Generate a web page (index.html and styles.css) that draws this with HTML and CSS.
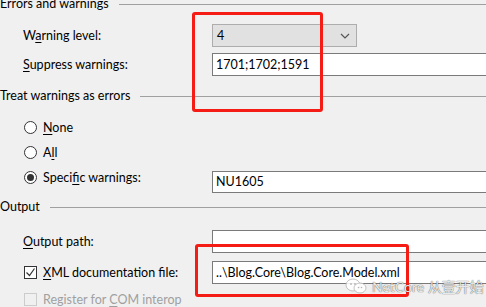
FILE: index.html
```html
<!DOCTYPE html>
<html lang="en">
<head>
    <meta charset="UTF-8">
    <title>Build options</title>
    <link rel="stylesheet" href="styles.css">
</head>
<body>
    <div class="page">
        <div class="group-title first"><span>Errors and warnings</span></div>
        <div class="row row-level">
            <span class="label">W<u>a</u>rning level:</span>
            <div class="select">
                <span>4</span>
                <svg class="chevron" width="10" height="6" viewBox="0 0 10 6"><path d="M1 1l4 4 4-4" fill="none" stroke="#555" stroke-width="1.2"/></svg>
            </div>
        </div>
        <div class="row row-suppress">
            <span class="label"><u>S</u>uppress warnings:</span>
            <div class="textbox">1701;1702;1591</div>
        </div>

        <div class="group-title treat"><span>Treat warnings as errors</span></div>
        <div class="radio-row">
            <span class="radio"></span><span><u>N</u>one</span>
        </div>
        <div class="radio-row">
            <span class="radio"></span><span>A<u>l</u>l</span>
        </div>
        <div class="radio-row specific">
            <span class="radio-label"><span class="radio checked"></span><span>Speci<u>f</u>ic warnings:</span></span>
            <div class="textbox short">NU1605</div>
        </div>

        <div class="group-title output"><span>Output</span></div>
        <div class="row row-path">
            <span class="label"><u>O</u>utput path:</span>
            <div class="textbox"></div>
        </div>
        <div class="row row-xml">
            <span class="label check-label"><span class="check on"><svg width="11" height="11" viewBox="0 0 11 11"><path d="M1.5 5.5l3 3 5-7" fill="none" stroke="#333" stroke-width="1.2"/></svg></span><span><u>X</u>ML documentation file:</span></span>
            <div class="textbox">..\Blog.Core\Blog.Core.Model.xml</div>
        </div>
        <div class="row row-com">
            <span class="label check-label disabled"><span class="check off"></span><span>Register for <u>C</u>OM interop</span></span>
        </div>
    </div>

    <div class="mark mark-top"></div>
    <div class="mark mark-bottom"></div>

    <div class="watermark">
        <svg width="22" height="16" viewBox="0 0 22 16">
            <ellipse cx="8" cy="7" rx="7" ry="6" fill="rgba(255,255,255,0.85)" stroke="#b5b5b5" stroke-width="0.8"/>
            <ellipse cx="15" cy="10" rx="6" ry="5" fill="rgba(255,255,255,0.85)" stroke="#b5b5b5" stroke-width="0.8"/>
            <circle cx="6" cy="6" r="0.9" fill="#b5b5b5"/>
            <circle cx="10" cy="6" r="0.9" fill="#b5b5b5"/>
            <circle cx="13.5" cy="9.5" r="0.8" fill="#b5b5b5"/>
            <circle cx="16.5" cy="9.5" r="0.8" fill="#b5b5b5"/>
        </svg>
        <span>NetCore 从壹开始</span>
    </div>
</body>
</html>
```

FILE: styles.css
```css
body {
    margin: 0;
    background: #f0f0f0;
    font-family: Lato, "Noto Sans CJK SC", sans-serif;
    font-size: 12.5px;
    color: #000;
    overflow: hidden;
    width: 486px;
    height: 307px;
    position: relative;
}

u {
    text-decoration: underline;
    text-underline-offset: 2px;
}

.group-title {
    display: flex;
    align-items: center;
    height: 16px;
    line-height: 16px;
}

.group-title::after {
    content: "";
    flex: 1;
    height: 1px;
    background: #a0a0a0;
    margin-left: 10px;
}

.group-title.first {
    margin-top: -4px;
}

.group-title.treat {
    margin-top: 12px;
}

.group-title.output {
    margin-top: 6px;
}

.row {
    display: flex;
    align-items: center;
    padding-left: 23px;
}

.row .label {
    width: 189px;
    flex: none;
}

.row-level {
    margin-top: 12px;
}

.row-suppress {
    margin-top: 6px;
}

.row-path {
    margin-top: 15px;
}

.row-xml {
    margin-top: 8px;
}

.row-com {
    height: 23px;
    margin-top: 4px;
}

.select {
    width: 145px;
    height: 23px;
    box-sizing: border-box;
    border: 1px solid #adadad;
    background: #e1e1e1;
    display: flex;
    align-items: center;
    justify-content: space-between;
    padding: 0 6px 0 4px;
}

/* text boxes run on past the window's right edge */
.textbox {
    width: 274px;
    height: 23px;
    box-sizing: border-box;
    border: 1px solid #7a7a7a;
    border-right: none;
    background: #fff;
    padding: 0 3px;
    line-height: 21px;
    white-space: nowrap;
    flex: none;
}

.textbox.short {
    height: 22px;
    line-height: 20px;
    margin-top: 6px;
}

.radio-row {
    display: flex;
    align-items: center;
    height: 25px;
    padding-left: 24px;
}

.group-title.treat + .radio-row {
    margin-top: 11px;
}

.radio-row.specific {
    align-items: flex-start;
    height: 28px;
}

.radio-label {
    display: flex;
    align-items: center;
    height: 25px;
    width: 188px;
    flex: none;
}

.radio {
    width: 13px;
    height: 13px;
    box-sizing: border-box;
    border: 1px solid #333;
    border-radius: 50%;
    background: #fff;
    margin-right: 6px;
    flex: none;
    display: flex;
    align-items: center;
    justify-content: center;
}

.radio.checked::after {
    content: "";
    width: 7px;
    height: 7px;
    border-radius: 50%;
    background: #333;
}

.check-label {
    display: flex;
    align-items: center;
    margin-left: 1px;
}

.row .check-label {
    width: 188px;
}

.check {
    width: 13px;
    height: 13px;
    box-sizing: border-box;
    border: 1px solid #333;
    background: #fff;
    margin-right: 6px;
    display: flex;
    align-items: center;
    justify-content: center;
    flex: none;
}

.check.off {
    border-color: #cccccc;
    background: #f0f0f0;
}

.disabled {
    color: #a0a0a0;
}

.mark {
    position: absolute;
    border: 3px solid #f41c14;
    border-radius: 3px;
    box-sizing: border-box;
}

.mark-top {
    left: 192px;
    top: 12px;
    width: 131px;
    height: 100px;
}

.mark-bottom {
    left: 195px;
    top: 244px;
    width: 214px;
    height: 53px;
}

.watermark {
    position: absolute;
    left: 345px;
    top: 276px;
    display: flex;
    align-items: center;
    gap: 5px;
    font-size: 14px;
    color: rgba(255, 255, 255, 0.9);
    text-shadow: 0 0 1px rgba(0, 0, 0, 0.6), 0 0 1px rgba(0, 0, 0, 0.4);
}
```
